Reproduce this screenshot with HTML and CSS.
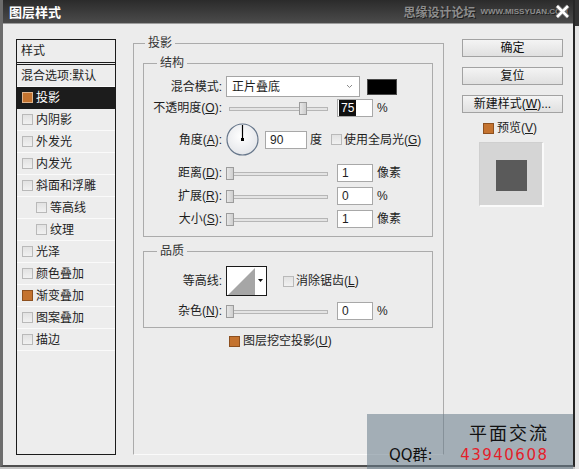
FILE: index.html
```html
<!DOCTYPE html>
<html lang="zh-CN">
<head>
    <meta charset="UTF-8">
    <title>图层样式</title>
    <link rel="stylesheet" href="styles.css">
</head>
<body>
    <div class="screen">
        <div class="window">
            <div class="titlebar">
                <span class="title">图层样式</span>
                <span class="brand">思缘设计论坛<span class="brand-url">WWW.MISSYUAN.COM</span></span>
                <span class="close">
                    <svg width="15" height="15" viewBox="0 0 15 15">
                        <path d="M2 2 L13 13 M13 2 L2 13" stroke="#6a6a6a" stroke-width="4.5"/>
                        <path d="M2 2 L13 13 M13 2 L2 13" stroke="#fff" stroke-width="2.6"/>
                    </svg>
                </span>
            </div>

            <div class="body">
                <div class="style-list">
                    <div class="list-head">样式</div>
                    <div class="list-item plain">混合选项:默认</div>
                    <div class="list-item selected"><span class="check on"></span>投影</div>
                    <div class="list-item"><span class="check"></span>内阴影</div>
                    <div class="list-item"><span class="check"></span>外发光</div>
                    <div class="list-item"><span class="check"></span>内发光</div>
                    <div class="list-item"><span class="check"></span>斜面和浮雕</div>
                    <div class="list-item sub"><span class="check"></span>等高线</div>
                    <div class="list-item sub"><span class="check"></span>纹理</div>
                    <div class="list-item"><span class="check"></span>光泽</div>
                    <div class="list-item"><span class="check"></span>颜色叠加</div>
                    <div class="list-item"><span class="check on"></span>渐变叠加</div>
                    <div class="list-item"><span class="check"></span>图案叠加</div>
                    <div class="list-item"><span class="check"></span>描边</div>
                </div>

                <div class="main">
                    <fieldset class="group outer">
                        <legend>投影</legend>

                        <fieldset class="group struct">
                            <legend>结构</legend>
                            <div class="row row-blend">
                                <span class="label">混合模式:</span>
                                <div class="select">
                                    <span>正片叠底</span>
                                    <svg width="7" height="5" viewBox="0 0 7 5"><path d="M1 1 L3.5 3.5 L6 1" fill="none" stroke="#8a8a8a" stroke-width="1"/></svg>
                                </div>
                                <span class="swatch"></span>
                            </div>
                            <div class="row row-opacity">
                                <span class="label">不透明度(<u>O</u>):</span>
                                <div class="slider"><span class="track"></span><span class="thumb" style="left: 73px"></span></div>
                                <span class="num selected"><span class="sel">75</span></span>
                                <span class="unit">%</span>
                            </div>
                            <div class="row row-angle">
                                <span class="label">角度(<u>A</u>):</span>
                                <svg class="dial" width="33" height="33" viewBox="0 0 33 33">
                                    <defs>
                                        <radialGradient id="dialFill" cx="0.45" cy="0.4" r="0.65">
                                            <stop offset="0" stop-color="#ffffff"/>
                                            <stop offset="1" stop-color="#e2e4e8"/>
                                        </radialGradient>
                                    </defs>
                                    <circle cx="16.5" cy="16.5" r="15.5" fill="url(#dialFill)" stroke="#66768a" stroke-width="1.2"/>
                                    <line x1="16.5" y1="16.5" x2="16.5" y2="2" stroke="#000" stroke-width="1.2"/>
                                    <rect x="15" y="15" width="3" height="3" fill="#000"/>
                                </svg>
                                <span class="num wide">90</span>
                                <span class="unit deg">度</span>
                                <span class="check global"></span>
                                <span class="check-text">使用全局光(<u>G</u>)</span>
                            </div>
                            <div class="row row-distance">
                                <span class="label">距离(<u>D</u>):</span>
                                <div class="slider"><span class="track"></span><span class="thumb" style="left: 0px"></span></div>
                                <span class="num">1</span>
                                <span class="unit">像素</span>
                            </div>
                            <div class="row row-next">
                                <span class="label">扩展(<u>R</u>):</span>
                                <div class="slider"><span class="track"></span><span class="thumb" style="left: 0px"></span></div>
                                <span class="num">0</span>
                                <span class="unit">%</span>
                            </div>
                            <div class="row row-next">
                                <span class="label">大小(<u>S</u>):</span>
                                <div class="slider"><span class="track"></span><span class="thumb" style="left: 0px"></span></div>
                                <span class="num">1</span>
                                <span class="unit">像素</span>
                            </div>
                        </fieldset>

                        <fieldset class="group quality">
                            <legend>品质</legend>
                            <div class="row">
                                <span class="label">等高线:</span>
                                <svg class="contour" width="41" height="30" viewBox="0 0 41 30">
                                    <rect x="0.5" y="0.5" width="40" height="29" fill="#fff" stroke="#1a1a1a"/>
                                    <polygon points="2,29 29,2 29,29" fill="#a6a6a6"/>
                                    <polygon points="32,13 37,13 34.5,16" fill="#111"/>
                                </svg>
                                <span class="check aa"></span>
                                <span class="check-text">消除锯齿(<u>L</u>)</span>
                            </div>
                            <div class="row row-noise">
                                <span class="label">杂色(<u>N</u>):</span>
                                <div class="slider"><span class="track"></span><span class="thumb" style="left: 0px"></span></div>
                                <span class="num">0</span>
                                <span class="unit">%</span>
                            </div>
                        </fieldset>

                        <div class="knockout">
                            <span class="check on"></span>
                            <span class="check-text">图层挖空投影(<u>U</u>)</span>
                        </div>
                    </fieldset>
                </div>

                <div class="actions">
                    <button class="btn">确定</button>
                    <button class="btn">复位</button>
                    <button class="btn">新建样式(<u>W</u>)...</button>
                    <div class="preview-toggle">
                        <span class="check on"></span>
                        <span class="check-text">预览(<u>V</u>)</span>
                    </div>
                    <div class="preview"><span class="preview-shape"></span></div>
                </div>
            </div>
        </div>
        <div class="side-strip"></div>

        <div class="watermark">
            <div class="wm-title">平面交流</div>
            <div class="wm-qq"><span>QQ群:</span><span class="wm-num">43940608</span></div>
        </div>
    </div>
</body>
</html>
```

FILE: styles.css
```css
* {
    box-sizing: border-box;
}
body {
    margin: 0;
    background: #cfcfcf;
    font: 12px/16px "Liberation Sans", "Noto Sans CJK SC", sans-serif;
    color: #1e1e1e;
}
.screen {
    position: relative;
    display: flex;
    width: 579px;
    height: 469px;
    overflow: hidden;
    background: #c4c4c4;
}
.window {
    display: flex;
    flex-direction: column;
    width: 575px;
    height: 467px;
    background: #ececec;
    border-left: 3px solid #6c6c6c;
    border-right: 2px solid #262626;
    border-bottom: 2px solid #4e4e4e;
}
.side-strip {
    width: 4px;
    height: 100%;
    background: linear-gradient(#333 0, #333 26px, #e4e4e4 26px);
}

/* title bar */
.titlebar {
    position: relative;
    display: flex;
    align-items: center;
    flex: none;
    height: 24px;
    padding: 0 5px 0 6px;
    background: linear-gradient(#2b2b2b, #4b4b4b);
    border-bottom: 1px solid #9d9d9d;
    color: #fff;
}
.title {
    font-family: "Noto Sans CJK SC", sans-serif;
    font-weight: bold;
    font-size: 13px;
}
.brand {
    display: flex;
    align-items: center;
    margin-left: auto;
    color: #8c8c8c;
    font-family: "Noto Sans CJK SC", sans-serif;
    font-weight: bold;
    text-shadow: 1px 1px 0 #1e1e1e;
}
.brand-url {
    margin-left: 5px;
    font-family: "Liberation Sans", sans-serif;
    font-size: 8px;
}
.close {
    position: absolute;
    right: 3px;
    top: 4px;
    display: flex;
}

/* body */
.body {
    display: flex;
    flex: 1;
    padding: 11px 0 0 13px;
}

/* styles list */
.style-list {
    width: 100px;
    height: 416px;
    margin-top: 4px;
    background: #ededed;
    border: 1px solid #1b1b1b;
}
.list-head {
    height: 25px;
    padding-left: 4px;
    line-height: 22px;
    border-bottom: 3px double #1b1b1b;
}
.list-item {
    display: flex;
    align-items: center;
    height: 22px;
    padding-left: 5px;
    border-bottom: 1px solid #fafafa;
}
.list-item.plain {
    padding-left: 4px;
}
.list-item.sub {
    padding-left: 19px;
}
.list-item.selected {
    background: #1c1c1c;
    color: #fff;
    border-bottom-color: #1c1c1c;
}
.check {
    flex: none;
    width: 11px;
    height: 11px;
    margin-right: 3px;
    background: linear-gradient(#e2e2e2, #f1f1f1);
    border: 1px solid #b9b9b9;
}
.check.on {
    background: #c4732f;
    border-color: #8d501f;
}
.selected .check.on {
    border-color: #e0b48c;
}

/* main panel */
.main {
    width: 311px;
    margin-left: 17px;
}
.group {
    min-width: 0;
    margin: 0;
    border: 1px solid #ababab;
}
.group legend {
    padding: 0 3px;
    margin-left: 7px;
    line-height: 16px;
    color: #333;
}
.outer {
    height: 420px;
    padding: 0 10px 0 9px;
    border-bottom-color: #fafafa;
}
.outer > legend {
    margin-left: 2px;
}
.struct {
    margin-top: 4px;
    padding: 5px 6px 8px 6px;
}
.quality {
    margin-top: 6px;
    padding: 7px 6px 7px 6px;
}
.row {
    display: flex;
    align-items: center;
}
.row-opacity {
    margin-top: 2px;
}
.row-angle {
    margin-top: 6px;
}
.row-distance {
    margin-top: 8px;
}
.row-next {
    margin-top: 5px;
}
.row-noise {
    margin-top: 6px;
}
.label {
    flex: none;
    width: 72px;
    margin-right: 4px;
    text-align: right;
    white-space: nowrap;
}
.select {
    display: flex;
    align-items: center;
    justify-content: space-between;
    width: 134px;
    height: 21px;
    padding: 0 6px 0 5px;
    background: #fff;
    border: 1px solid #a5a5a5;
}
.swatch {
    width: 30px;
    height: 16px;
    margin-left: 7px;
    background: #000;
    border: 1px solid #4a4a4a;
}
.slider {
    position: relative;
    flex: none;
    width: 105px;
    height: 13px;
    margin-right: 6px;
}
.track {
    position: absolute;
    left: 3px;
    right: 3px;
    top: 5px;
    height: 4px;
    background: #e4e4e4;
    border: 1px solid #b6b6b6;
}
.thumb {
    position: absolute;
    top: 0;
    width: 8px;
    height: 13px;
    background: linear-gradient(90deg, #e6e6e6, #cfcfcf);
    border: 1px solid #9c9c9c;
}
.num {
    flex: none;
    width: 36px;
    height: 18px;
    padding-left: 4px;
    background: #fff;
    border: 1px solid #a8a8a8;
    line-height: 16px;
}
.num.selected {
    padding-left: 1px;
}
.sel {
    display: inline-block;
    padding: 0 2px;
    background: #111;
    color: #fff;
}
.num.wide {
    width: 42px;
    margin-left: 6px;
}
.unit {
    margin-left: 4px;
}
.unit.deg {
    margin-left: 3px;
}
.check.global {
    margin-left: 9px;
    margin-right: 2px;
}
.contour {
    flex: none;
}
.check.aa {
    margin-left: 16px;
    margin-right: 2px;
}
.knockout {
    display: flex;
    align-items: center;
    height: 16px;
    margin: 5px 0 0 86px;
}

/* right column */
.actions {
    display: flex;
    flex-direction: column;
    width: 101px;
    margin: 4px 0 0 18px;
}
.btn {
    height: 18px;
    margin: 0 0 10px;
    padding: 0;
    font: inherit;
    line-height: 16px;
    color: #111;
    background: linear-gradient(#f4f4f4, #e0e0e0);
    border: 1px solid #a2a2a2;
}
.preview-toggle {
    display: flex;
    align-items: center;
    height: 16px;
    margin-top: -3px;
    padding-left: 21px;
}
.preview {
    display: flex;
    width: 65px;
    height: 65px;
    margin: 6px 0 0 17px;
    padding: 17px 0 0 16px;
    background: #d5d5d5;
    border-top: 1px solid #cfcfcf;
    border-left: 1px solid #cfcfcf;
    border-right: 2px solid #fafafa;
    border-bottom: 2px solid #fafafa;
}
.preview-shape {
    width: 31px;
    height: 31px;
    background: #5a5a5a;
}

/* watermark */
.watermark {
    position: absolute;
    left: 367px;
    top: 414px;
    width: 206px;
    height: 55px;
    padding: 7px 26px 0 22px;
    background: rgba(104, 124, 139, 0.55);
}
.wm-title {
    text-align: right;
    font: 18px/22px "Noto Sans CJK SC", sans-serif;
    letter-spacing: 2px;
    margin-right: -2px;
    color: #111;
}
.wm-qq {
    display: flex;
    justify-content: space-between;
    margin-top: 2px;
    font: 15px/20px "DejaVu Sans", "Noto Sans CJK SC", sans-serif;
    color: #111;
}
.wm-num {
    color: #e41e2b;
    letter-spacing: 1.5px;
    margin-right: -1.5px;
}
```
